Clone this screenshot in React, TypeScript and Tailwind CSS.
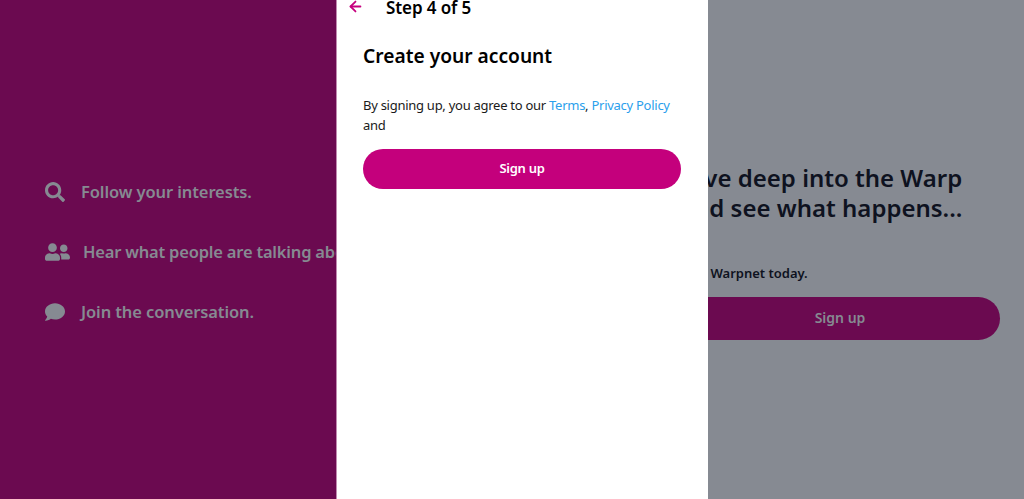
import React from 'react';
import { FaSearch, FaUserFriends, FaComment } from 'react-icons/fa';
import { ArrowLeft } from 'lucide-react';

const App = () => {
  return (
    <div className="relative flex h-[499px] w-[1024px] overflow-hidden bg-[#868a92] font-['Noto_Sans',sans-serif]">
      {/* landing page behind the dialog, colours already dimmed by the backdrop */}
      <div className="flex w-1/2 flex-col justify-center gap-[37px] overflow-hidden bg-[#6b0a50] pt-[5px] pl-[45px] text-[16.5px] font-semibold tracking-[-0.1px] whitespace-nowrap text-[#868a92]">
        <div className="flex h-[23px] items-center gap-[16px]">
          <FaSearch className="h-[20px] w-[20px]" />
          <span>Follow your interests.</span>
        </div>
        <div className="flex h-[23px] items-center gap-[13px]">
          <FaUserFriends className="h-[20px] w-[25px]" />
          <span className="tracking-[-0.2px]">Hear what people are talking about.</span>
        </div>
        <div className="flex h-[23px] items-center gap-[16px]">
          <FaComment className="h-[20px] w-[20px]" />
          <span>Join the conversation.</span>
        </div>
      </div>

      <div className="flex w-1/2 flex-col pt-[163px] pl-[168px] text-[#0e1220]">
        <h2 className="w-[322px] text-[24px] leading-[30px] font-semibold">
          Dive deep into the Warp and see what happens...
        </h2>
        <p className="mt-[40px] pl-[3px] text-[13px] leading-[20px] font-semibold">Join Warpnet today.</p>
        <button className="mt-[14px] flex h-[43px] w-[320px] items-center justify-center rounded-full bg-[#6b0a50] pb-[2px] text-[14px] font-semibold text-[#868a92]">
          Sign up
        </button>
      </div>

      {/* dialog */}
      <div className="absolute top-0 bottom-0 left-[336px] w-[372px] border-l border-[#c08bb0] bg-white text-black">
        <div className="flex h-[16px] items-center pl-[10px]">
          <ArrowLeft className="h-[17px] w-[17px] -translate-y-[2px] text-[#c6007e]" strokeWidth={2.5} />
          <span className="ml-[22px] text-[17px] leading-[22px] font-semibold tracking-[-0.1px]">Step 4 of 5</span>
        </div>
        <div className="pt-[27px] pr-[27px] pl-[26px]">
          <h1 className="text-[19.2px] leading-[26px] font-semibold">Create your account</h1>
          <p className="mt-[26px] w-[318px] text-[13px] leading-[20px] tracking-[-0.27px] text-[#1a1a1a]">
            By signing up, you agree to our{' '}
            <span className="text-[#2ba0ec]">Terms</span>,{' '}
            <span className="text-[#2ba0ec]">Privacy Policy</span> and
          </p>
          <button className="mt-[14px] flex h-[40px] w-[318px] items-center justify-center rounded-full bg-[#c4007c] pb-[1px] text-[13px] font-semibold tracking-[-0.3px] text-white">
            Sign up
          </button>
        </div>
      </div>
    </div>
  );
};

export default App;
